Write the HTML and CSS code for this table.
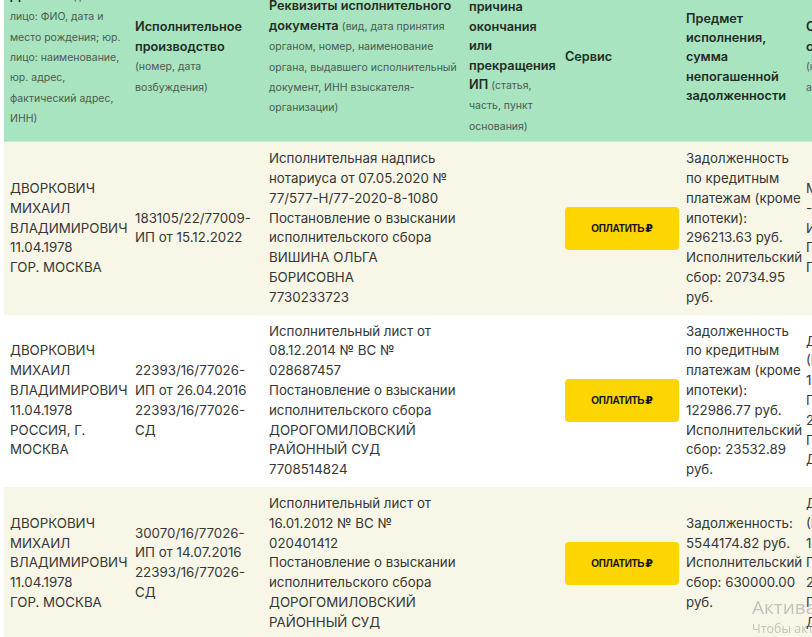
FILE: index.html
```html
<!DOCTYPE html>
<html lang="ru">
<head>
<meta charset="utf-8">
<title>Исполнительные производства</title>
<link rel="stylesheet" href="styles.css">
</head>
<body>
<div class="page">
  <table class="ip-table">
    <colgroup>
      <col class="c-debtor">
      <col class="c-ip">
      <col class="c-doc">
      <col class="c-end">
      <col class="c-service">
      <col class="c-subject">
      <col class="c-dept">
    </colgroup>
    <thead>
      <tr>
        <th><b>Должник</b> <span class="hint">(физ. лицо: ФИО, дата и место рождения; юр. лицо: наименование, юр. адрес, фактический адрес, ИНН)</span></th>
        <th><b>Исполнительное производство</b> <span class="hint">(номер, дата возбуждения)</span></th>
        <th><b>Реквизиты исполнительного документа</b> <span class="hint">(вид, дата принятия органом, номер, наименование органа, выдавшего исполнительный документ, ИНН взыскателя-организации)</span></th>
        <th><b>Дата, причина окончания или прекращения ИП</b> <span class="hint">(статья, часть, пункт основания)</span></th>
        <th><b>Сервис</b></th>
        <th><b>Предмет исполнения, сумма непогашенной задолженности</b></th>
        <th><b>Отдел<br>судебных приставов</b><br><span class="hint">(наименование,<br>адрес)</span></th>
      </tr>
    </thead>
    <tbody>
      <tr class="row-alt">
        <td>ДВОРКОВИЧ<br>МИХАИЛ<br>ВЛАДИМИРОВИЧ<br>11.04.1978<br>ГОР. МОСКВА</td>
        <td>183105/22/77009-<br>ИП от 15.12.2022</td>
        <td>Исполнительная надпись<br>нотариуса от 07.05.2020 №<br>77/577-Н/77-2020-8-1080<br>Постановление о взыскании<br>исполнительского сбора<br>ВИШИНА ОЛЬГА<br>БОРИСОВНА<br>7730233723</td>
        <td></td>
        <td><button class="pay-btn" type="button">Оплатить<span class="rub">₽</span></button></td>
        <td>Задолженность<br>по кредитным<br>платежам (кроме<br>ипотеки):<br>296213.63 руб.<br>Исполнительский<br>сбор: 20734.95<br>руб.</td>
        <td>МОСП ПО ВЗЫСКАНИЮ<br>-<br>ИНН<br>ГУФССП<br>ПО Г. МОСКВЕ</td>
      </tr>
      <tr>
        <td>ДВОРКОВИЧ<br>МИХАИЛ<br>ВЛАДИМИРОВИЧ<br>11.04.1978<br>РОССИЯ, Г.<br>МОСКВА</td>
        <td>22393/16/77026-<br>ИП от 26.04.2016<br>22393/16/77026-<br>СД</td>
        <td>Исполнительный лист от<br>08.12.2014 № ВС №<br>028687457<br>Постановление о взыскании<br>исполнительского сбора<br>ДОРОГОМИЛОВСКИЙ<br>РАЙОННЫЙ СУД<br>7708514824</td>
        <td></td>
        <td><button class="pay-btn" type="button">Оплатить<span class="rub">₽</span></button></td>
        <td>Задолженность<br>по кредитным<br>платежам (кроме<br>ипотеки):<br>122986.77 руб.<br>Исполнительский<br>сбор: 23532.89<br>руб.</td>
        <td>Дорогомиловский ОСП<br>(Россия,<br>121170,<br>Г. Москва,<br>2-й<br>Гончаров пер.,<br>Д. 9)</td>
      </tr>
      <tr class="row-alt">
        <td>ДВОРКОВИЧ<br>МИХАИЛ<br>ВЛАДИМИРОВИЧ<br>11.04.1978<br>ГОР. МОСКВА</td>
        <td>30070/16/77026-<br>ИП от 14.07.2016<br>22393/16/77026-<br>СД</td>
        <td>Исполнительный лист от<br>16.01.2012 № ВС №<br>020401412<br>Постановление о взыскании<br>исполнительского сбора<br>ДОРОГОМИЛОВСКИЙ<br>РАЙОННЫЙ СУД</td>
        <td></td>
        <td><button class="pay-btn" type="button">Оплатить<span class="rub">₽</span></button></td>
        <td>Задолженность:<br>5544174.82 руб.<br>Исполнительский<br>сбор: 630000.00<br>руб.</td>
        <td>Дорогомиловский ОСП<br>(Россия,<br>121170,<br>Г. Москва,<br>2-й<br>Гончаров пер.,<br>Д. 9)</td>
      </tr>
    </tbody>
  </table>
</div>
<div class="activation">
  <div class="act-title">Активация Windows</div>
  <div class="act-sub">Чтобы активировать Windows, перейдите в раздел "Параметры".</div>
</div>
</body>
</html>
```

FILE: styles.css
```css
html, body {
  margin: 0;
  padding: 0;
  overflow: hidden;
  background: #ffffff;
}

body {
  font-family: Inter, "Noto Sans", "DejaVu Sans", sans-serif;
  color: #333333;
}

.page {
  padding-left: 4px;
  margin-top: -28px;
}

.ip-table {
  border-collapse: collapse;
  table-layout: fixed;
  width: 960px;
}

.c-debtor { width: 125px; }
.c-ip { width: 134px; }
.c-doc { width: 200px; }
.c-end { width: 96px; }
.c-service { width: 121px; }
.c-subject { width: 120px; }
.c-dept { width: 164px; }

.ip-table th,
.ip-table td {
  padding: 7px 1px 7px 6px;
  vertical-align: middle;
  text-align: left;
}

.ip-table thead th {
  background: #a8e4bf;
  font-size: 12.7px;
  font-weight: 600;
  line-height: 19.4px;
  color: #1f2d25;
  padding-top: 6px;
  padding-bottom: 5px;
  border-bottom: 1px solid #c3ecd1;
}

.ip-table thead th b {
  font-weight: 600;
}

.ip-table thead .hint {
  font-size: 10.5px;
  font-weight: 400;
  color: #4d5a52;
}

.ip-table td {
  font-size: 13.3px;
  line-height: 19.8px;
  color: #363636;
  white-space: nowrap;
}

.ip-table tbody tr {
  background: #ffffff;
}

.ip-table tbody tr.row-alt {
  background: #f8f7e7;
}

.pay-btn {
  display: flex;
  align-items: center;
  justify-content: center;
  width: 114px;
  height: 43px;
  border: none;
  border-radius: 4px;
  background: #fdd602;
  color: #141414;
  font-family: "Liberation Sans", Arial, sans-serif;
  font-weight: 700;
  font-size: 10px;
  letter-spacing: -0.3px;
  text-transform: uppercase;
  padding: 0;
}

.pay-btn .rub {
  font-family: "DejaVu Sans", sans-serif;
  font-size: 11px;
  margin-left: 1px;
}

.activation {
  position: fixed;
  left: 752px;
  top: 595px;
  white-space: nowrap;
  font-family: "Open Sans", "Noto Sans", sans-serif;
  color: rgba(150, 150, 150, 0.55);
}

.act-title {
  font-size: 19px;
  line-height: 24px;
}

.act-sub {
  font-size: 12.5px;
  line-height: 19px;
}
```
